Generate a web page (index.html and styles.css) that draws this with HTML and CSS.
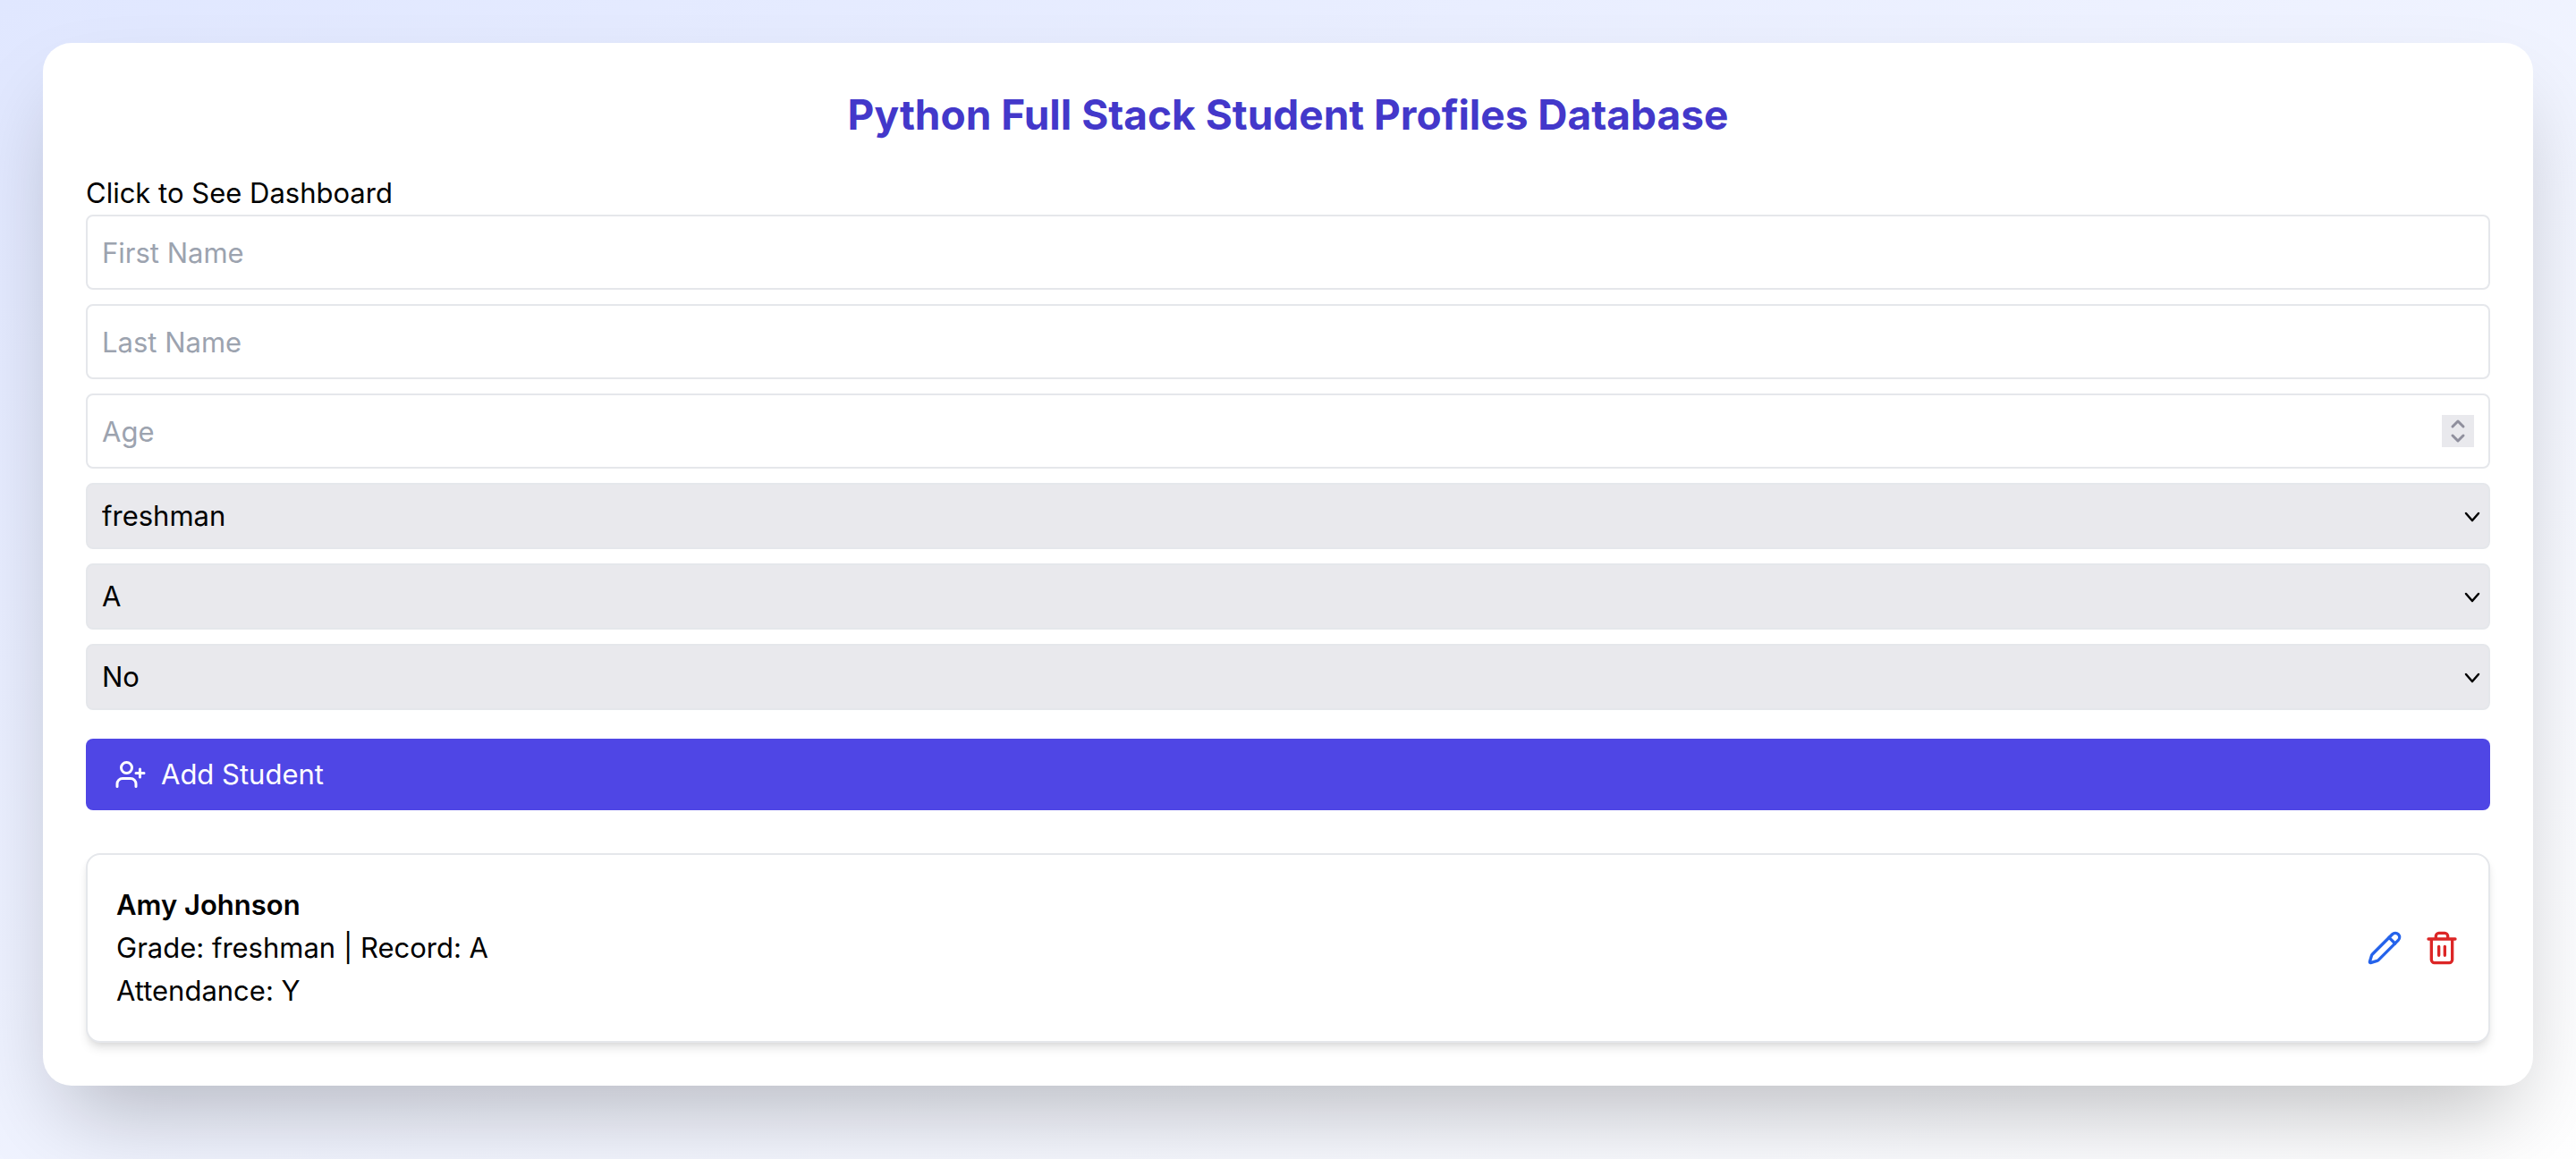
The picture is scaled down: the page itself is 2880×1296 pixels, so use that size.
FILE: index.html
```html
<!DOCTYPE html>
<html lang="en">
<head>
  <meta charset="utf-8">
  <meta name="viewport" content="width=device-width, initial-scale=1">
  <title>Python Full Stack Student Profiles Database</title>
  <link rel="stylesheet" href="styles.css">
</head>
<body class="page">
  <main class="panel">
    <h1 class="title">Python Full Stack Student Profiles Database</h1>
    <a class="dashboard-link" href="#dashboard">Click to See Dashboard</a>
    <form class="form">
      <input class="field" type="text" placeholder="First Name" aria-label="First Name">
      <input class="field" type="text" placeholder="Last Name" aria-label="Last Name">
      <input class="field" type="number" placeholder="Age" aria-label="Age">
      <select class="select" aria-label="Grade">
        <option>freshman</option>
        <option>sophomore</option>
        <option>junior</option>
        <option>senior</option>
      </select>
      <select class="select" aria-label="Record">
        <option>A</option>
        <option>B</option>
        <option>C</option>
      </select>
      <select class="select" aria-label="Attendance">
        <option>No</option>
        <option>Yes</option>
      </select>
      <button class="submit" type="button">
        <svg class="submit-icon" viewBox="0 0 24 24" aria-hidden="true"><path d="M16 21v-2a4 4 0 0 0-4-4H6a4 4 0 0 0-4 4v2"/><circle cx="9" cy="7" r="4"/><path d="M19 8v6M22 11h-6"/></svg>
        Add Student
      </button>
    </form>
    <ul class="students">
      <li class="student">
        <div class="student-info">
          <h2 class="student-name">Amy Johnson</h2>
          <p>Grade: freshman | Record: A</p>
          <p>Attendance: Y</p>
        </div>
        <div class="actions">
          <button class="action action-edit" type="button" aria-label="Edit">
            <svg class="action-icon" viewBox="0 0 24 24" aria-hidden="true"><path d="M21.174 6.812a1 1 0 0 0-3.986-3.987L3.842 16.174a2 2 0 0 0-.5.83l-1.321 4.352a.5.5 0 0 0 .623.622l4.353-1.32a2 2 0 0 0 .83-.497z"/><path d="m15 5 4 4"/></svg>
          </button>
          <button class="action action-delete" type="button" aria-label="Delete">
            <svg class="action-icon" viewBox="0 0 24 24" aria-hidden="true"><path d="M3 6h18M19 6v14c0 1-1 2-2 2H7c-1 0-2-1-2-2V6M8 6V4c0-1 1-2 2-2h4c1 0 2 1 2 2v2M10 11v6M14 11v6"/></svg>
          </button>
        </div>
      </li>
    </ul>
  </main>
</body>
</html>
```
FILE: styles.css
```css
* {
  box-sizing: border-box;
  margin: 0;
}

.page {
  min-height: 100vh;
  padding: 48px;
  background: linear-gradient(to bottom right, #e0e7ff, #ffffff);
  color: #000;
  font-family: Inter, "Liberation Sans", sans-serif;
  font-size: 31px;
  line-height: 48px;
}

input,
select,
button {
  color: inherit;
  font: inherit;
}

.panel {
  padding: 48px;
  border-radius: 32px;
  background: #fff;
  box-shadow: 0 50px 100px -24px rgba(0, 0, 0, 0.25);
}

.title {
  margin-bottom: 32px;
  color: #4338ca;
  font-size: 46px;
  font-weight: 700;
  line-height: 64px;
  text-align: center;
}

.dashboard-link {
  color: inherit;
  text-decoration: none;
}

.form {
  display: flex;
  flex-direction: column;
  gap: 16px;
}

.field {
  width: 100%;
  height: 84px;
  padding: 16px;
  border: 2px solid #e5e7eb;
  border-radius: 8px;
  background: #fff;
}

.field::placeholder {
  color: #9ca3af;
  opacity: 1;
}

.field::-webkit-inner-spin-button {
  width: 36px;
  height: 36px;
  appearance: none;
  opacity: 1;
  background: #e9e9ed url("data:image/svg+xml,%3Csvg xmlns='http://www.w3.org/2000/svg' viewBox='0 0 36 36' fill='none' stroke='%238f8f9d' stroke-width='3' stroke-linecap='round' stroke-linejoin='round'%3E%3Cpath d='M12 13l6-6 6 6M12 23l6 6 6-6'/%3E%3C/svg%3E") center / 36px 36px no-repeat;
}

.select {
  width: 100%;
  height: 74px;
  padding: 0 16px;
  border: 2px solid #e5e7eb;
  border-radius: 8px;
  appearance: none;
  background: #e9e9ed url("data:image/svg+xml,%3Csvg xmlns='http://www.w3.org/2000/svg' viewBox='0 0 20 20' fill='none' stroke='%23000' stroke-width='2.500' stroke-linecap='round' stroke-linejoin='round'%3E%3Cpath d='M3 7l7 8 7-8'/%3E%3C/svg%3E") right 8px center / 20px 20px no-repeat;
}

.submit {
  display: flex;
  align-items: center;
  gap: 16px;
  margin-top: 16px;
  padding: 16px 32px;
  border: 0;
  border-radius: 8px;
  background: #4f46e5;
  color: #fff;
}

.submit-icon,
.action-icon {
  display: block;
  fill: none;
  stroke: currentColor;
  stroke-width: 2;
  stroke-linecap: round;
  stroke-linejoin: round;
}

.submit-icon {
  width: 36px;
  height: 36px;
}

.students {
  margin-top: 48px;
  padding: 0;
  list-style: none;
}

.student {
  display: flex;
  align-items: center;
  justify-content: space-between;
  padding: 32px;
  border: 2px solid #e5e7eb;
  border-radius: 16px;
  background: #fff;
  box-shadow: 0 8px 12px -2px rgba(0, 0, 0, 0.1), 0 4px 8px -4px rgba(0, 0, 0, 0.1);
}

.student-name {
  font-size: inherit;
  font-weight: 600;
}

.actions {
  display: flex;
  gap: 24px;
}

.action {
  padding: 0;
  border: 0;
  background: none;
}

.action-edit {
  color: #2563eb;
}

.action-delete {
  color: #dc2626;
}

.action-icon {
  width: 40px;
  height: 40px;
}
```
